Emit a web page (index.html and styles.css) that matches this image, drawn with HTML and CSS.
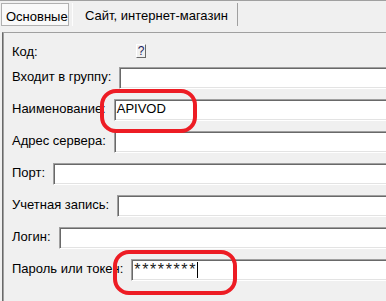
FILE: index.html
```html
<!DOCTYPE html>
<html>
<head>
<meta charset="utf-8">
<link rel="stylesheet" href="styles.css">
</head>
<body>
<div class="window">
  <div class="tabs">
    <div class="tab tab-active">Основные</div>
    <div class="tab tab-second">Сайт, интернет-магазин</div>
  </div>
  <div class="panel">
    <div class="form">
      <div class="code-row"><span class="label code-label">Код:</span><span class="qbtn">?</span></div>
      <div class="row"><span class="label">Входит в группу:</span><div class="field"></div></div>
      <div class="row"><span class="label">Наименование:</span><div class="field">APIVOD</div></div>
      <div class="row"><span class="label">Адрес сервера:</span><div class="field"></div></div>
      <div class="row"><span class="label">Порт:</span><div class="field"></div></div>
      <div class="row"><span class="label">Учетная запись:</span><div class="field"></div></div>
      <div class="row"><span class="label">Логин:</span><div class="field"></div></div>
      <div class="row"><span class="label">Пароль или токен:</span><div class="field field-pass"><span class="stars">********</span><span class="caret"></span></div></div>
    </div>
  </div>
  <div class="mark mark-name"></div>
  <div class="mark mark-pass"></div>
</div>
</body>
</html>
```

FILE: styles.css
```css
html, body {
  margin: 0;
  padding: 0;
  overflow: hidden;
  background: #f0f0f0;
}
body {
  font-family: "Liberation Sans", Arial, sans-serif;
  font-size: 13px;
  color: #000;
}
.window {
  position: relative;
  width: 386px;
  height: 301px;
  overflow: hidden;
  border-top: 1px solid #a0a0a0;
  box-sizing: border-box;
}
.tabs {
  display: flex;
  align-items: flex-start;
  height: 31px;
  padding: 2px 0 0 1px;
  box-sizing: border-box;
}
.tab {
  height: 23px;
  box-sizing: border-box;
  line-height: 15px;
  padding-top: 5px;
  white-space: nowrap;
}
.tab-active {
  width: 68px;
  border: 1px solid #b0b0b0;
  background: #f9f9f9;
  padding-left: 4px;
}
.tab-second {
  margin-left: 3px;
  border-left: 1px solid #fdfdfd;
  border-right: 1px solid #a0a0a0;
  padding-left: 12px;
  width: 166px;
}
.panel {
  margin-left: 2px;
  border-top: 1px solid #a0a0a0;
  border-left: 1px solid #696969;
  box-shadow: inset 1px 0 #a0a0a0;
  width: 440px;
  height: 270px;
}
.form {
  display: flex;
  flex-direction: column;
  gap: 10px;
  padding: 11px 0 0 9px;
}
.code-row {
  display: flex;
  align-items: flex-start;
  height: 13px;
}
.label {
  line-height: 15px;
  white-space: nowrap;
}
.code-label {
  width: 124px;
}
.qbtn {
  width: 10px;
  height: 14px;
  box-sizing: border-box;
  border: 1px solid;
  border-color: #ffffff #696969 #696969 #ffffff;
  background: #f0f0f0;
  font-size: 12px;
  line-height: 12px;
  text-align: center;
  color: #1c1c5c;
}
.row {
  display: flex;
  align-items: flex-start;
  gap: 8px;
  height: 22px;
}
.row .label {
  margin-top: 2px;
}
.field {
  flex: 1;
  height: 22px;
  box-sizing: border-box;
  background: #fff;
  border-top: 1px solid #a0a0a0;
  border-left: 1px solid #a0a0a0;
  border-bottom: 1px solid #ffffff;
  border-right: 1px solid #ffffff;
  box-shadow: inset 1px 1px #696969, inset -1px -1px #e3e3e3;
  padding: 1px 2px;
  line-height: 15px;
  white-space: nowrap;
}
.field-pass {
  display: flex;
  align-items: flex-start;
}
.stars {
  font-size: 16px;
  line-height: 18px;
  letter-spacing: 1.6px;
  color: #1a1a1a;
}
.caret {
  width: 1px;
  height: 16px;
  margin-top: 1px;
  background: #000;
}
.mark {
  position: absolute;
  border: 4px solid #ed1c24;
  border-radius: 16px;
  box-sizing: border-box;
}
.mark-name {
  left: 100px;
  top: 88px;
  width: 97px;
  height: 44px;
}
.mark-pass {
  left: 113px;
  top: 249px;
  width: 124px;
  height: 45px;
}
```
